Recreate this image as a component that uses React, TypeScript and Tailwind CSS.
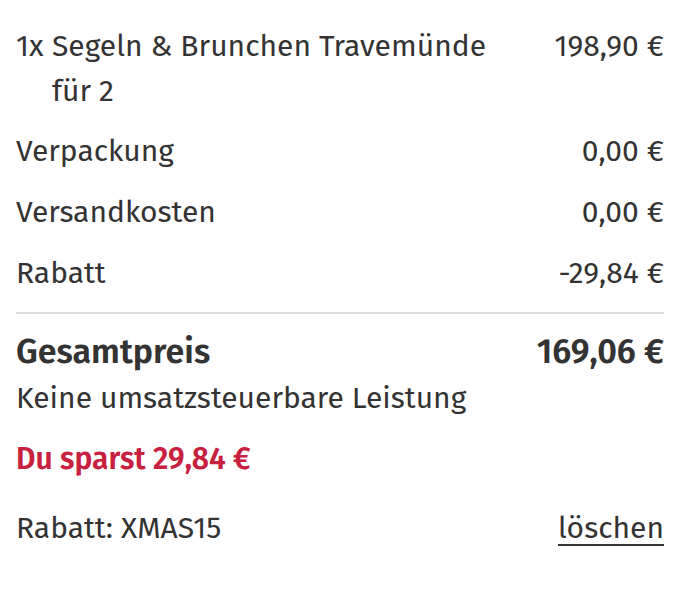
import React from "react";

export default function App() {
  return (
    <div
      className="w-[680px] h-[590px] bg-white text-[#333333] text-[30px] leading-[45px] font-normal pl-4 pr-4 pt-[24px]"
      style={{ fontFamily: '"Fira Sans", "Open Sans", "Noto Sans", sans-serif' }}
    >
      <div className="flex justify-between">
        <div className="flex">
          <span className="w-[36px] shrink-0">1x</span>
          <span>
            Segeln &amp; Brunchen Travemünde
            <br />
            für 2
          </span>
        </div>
        <span>198,90 €</span>
      </div>
      <div className="flex justify-between mt-[15px]">
        <span>Verpackung</span>
        <span>0,00 €</span>
      </div>
      <div className="flex justify-between mt-[16px]">
        <span>Versandkosten</span>
        <span>0,00 €</span>
      </div>
      <div className="flex justify-between mt-[16px]">
        <span>Rabatt</span>
        <span>-29,84 €</span>
      </div>
      <div className="h-[2px] bg-[#dddddd] mt-[16px]" />
      <div className="flex justify-between mt-[18px] text-[34px] leading-[40px] font-semibold">
        <span>Gesamtpreis</span>
        <span>169,06 €</span>
      </div>
      <div className="mt-[4px]">Keine umsatzsteuerbare Leistung</div>
      <div className="mt-[16px] font-semibold text-[#c8203f]">Du sparst 29,84 €</div>
      <div className="flex justify-between mt-[24px]">
        <span>Rabatt: XMAS15</span>
        <span className="underline underline-offset-[6px] decoration-[2px]">löschen</span>
      </div>
    </div>
  );
}
